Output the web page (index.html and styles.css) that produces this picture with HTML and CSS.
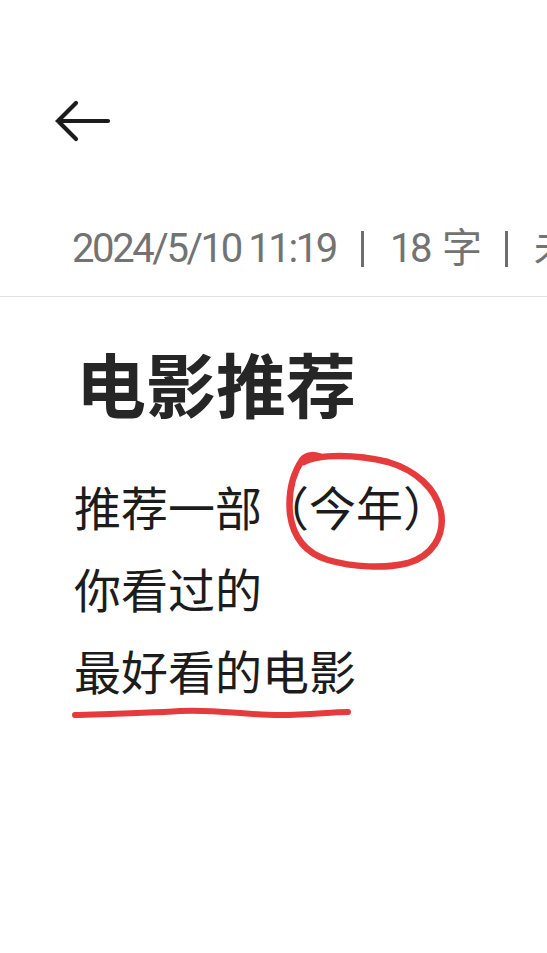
FILE: index.html
```html
<!DOCTYPE html>
<html lang="zh-CN">
<head>
<meta charset="utf-8">
<title>电影推荐</title>
<link rel="stylesheet" href="styles.css">
</head>
<body>
<div class="page">
  <header class="topbar">
    <svg class="back" width="60" height="44" viewBox="0 0 60 44" aria-label="返回">
      <path d="M21 3 L3 21 L21 39 M3 21 H53" fill="none" stroke="#1c1c1c" stroke-width="4.2" stroke-linecap="round" stroke-linejoin="miter"/>
    </svg>
  </header>
  <div class="meta">
    <span class="meta-item">2024/5/10 11:19</span>
    <span class="sep"></span>
    <span class="meta-item">18<span class="gap"></span>字</span>
    <span class="sep"></span>
    <span class="meta-item">未分类</span>
  </div>
  <div class="divider"></div>
  <main class="note">
    <h1 class="title">电影推荐</h1>
    <p class="line">推荐一部（今年）</p>
    <p class="line">你看过的</p>
    <p class="line">最好看的电影</p>
  </main>
  <svg class="marks" width="547" height="953" viewBox="0 0 547 953">
    <path d="M304 462 C318 454 356 454 388 462 C415 470 436 488 441 512 C445 536 432 556 408 563 C385 569 352 567 328 560 C305 553 293 536 290 514 C288 492 292 475 302 460 C308 452 318 456 322 457" fill="none" stroke="#e53b3d" stroke-width="6.5" stroke-linecap="round" stroke-linejoin="round"/>
    <path d="M75 715 C110 714 150 713 180 711 C215 709 245 715 280 715 C310 715 330 712 348 712" fill="none" stroke="#e53b3d" stroke-width="6" stroke-linecap="round"/>
  </svg>
</div>
</body>
</html>
```

FILE: styles.css
```css
html, body {
  margin: 0;
  padding: 0;
  background: #ffffff;
}
body {
  width: 547px;
  height: 953px;
  overflow: hidden;
  font-family: Roboto, "Noto Sans CJK SC", sans-serif;
}
.page {
  position: relative;
  width: 547px;
  height: 953px;
  overflow: hidden;
}
.topbar {
  padding: 100px 0 0 55px;
  height: 44px;
}
.back {
  display: block;
}
.meta {
  margin-top: 87px;
  padding-left: 72px;
  display: flex;
  align-items: center;
  white-space: nowrap;
  height: 36px;
  font-size: 40px;
  letter-spacing: -2.4px;
  color: #737373;
}
.meta-item {
  flex: none;
  line-height: 36px;
}
.gap {
  display: inline-block;
  width: 12px;
}
.sep {
  flex: none;
  width: 3px;
  height: 36px;
  background: #6e6e6e;
  margin: 0 26px 0 25px;
}
.divider {
  margin-top: 29px;
  height: 1px;
  background: #e2e2e2;
}
.note {
  padding-left: 74px;
}
.title {
  margin: 44px 0 0 2px;
  font-family: "Noto Sans CJK SC", sans-serif;
  font-size: 70px;
  font-weight: 700;
  line-height: 84px;
  color: #262626;
}
.line {
  margin: 0;
  font-family: "Noto Sans CJK SC", sans-serif;
  font-size: 47px;
  font-weight: 400;
  line-height: 82px;
  color: #1c1c1c;
}
.title + .line {
  margin-top: 40px;
}
.marks {
  position: absolute;
  left: 0;
  top: 0;
  pointer-events: none;
}
```
